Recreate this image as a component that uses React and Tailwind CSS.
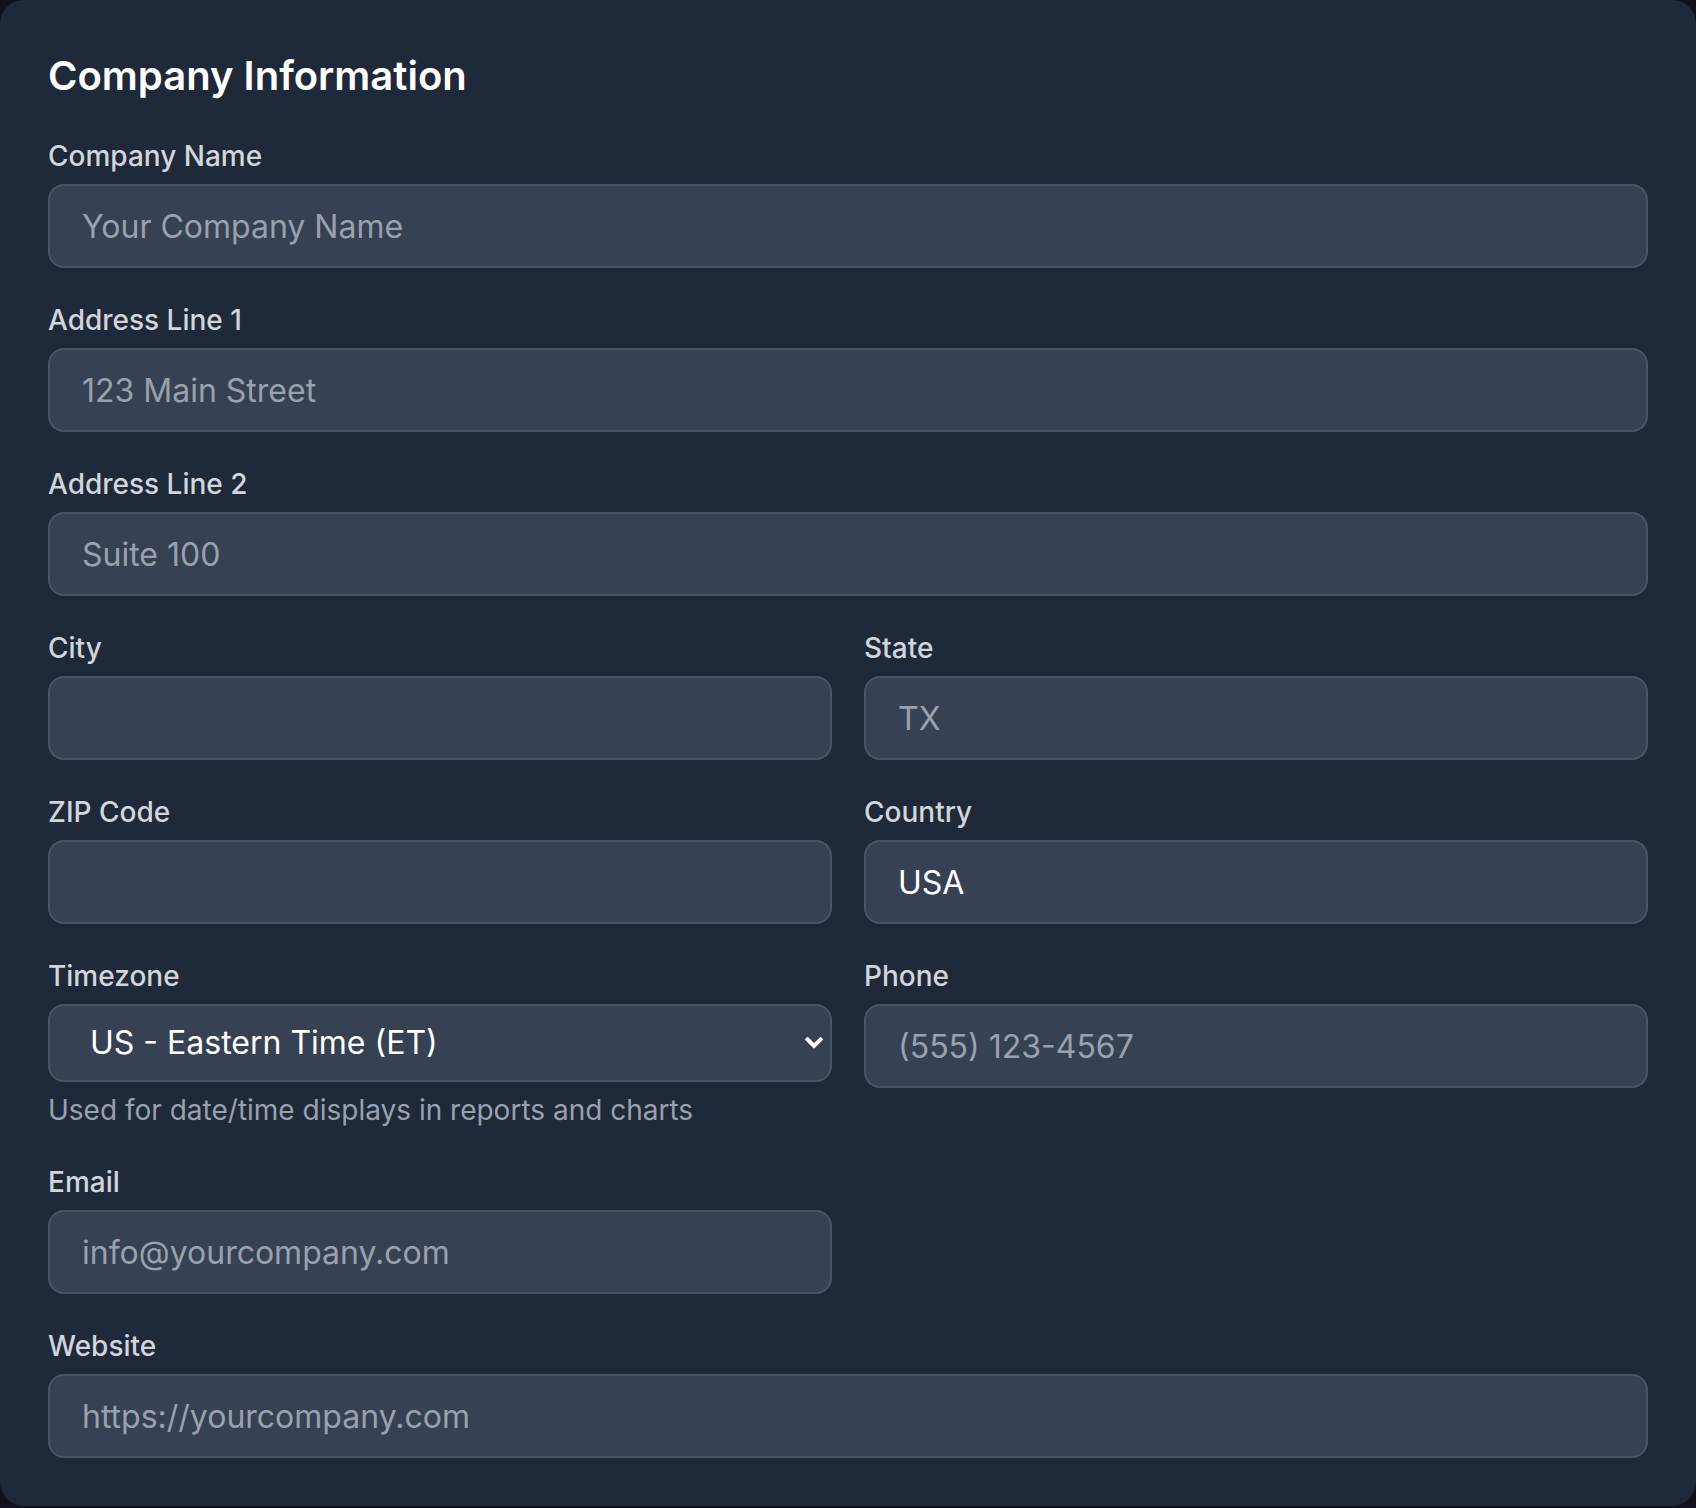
import { useState } from 'react';

// Field wrapper: label + control
function Field({ label, children, className = '' }) {
  return (
    <div className={`flex flex-col ${className}`}>
      <label className="mb-2 text-[28px] leading-[40px] font-medium text-gray-300">{label}</label>
      {children}
    </div>
  );
}

function TextInput({ placeholder, value }) {
  return (
    <input
      type="text"
      defaultValue={value}
      placeholder={placeholder}
      className="h-[84px] w-full rounded-2xl border-2 border-gray-600 bg-gray-700 px-8 text-[32px] leading-[48px] text-white placeholder:text-gray-400 outline-none"
    />
  );
}

export default function App() {
  const [tz, setTz] = useState('America/New_York');

  return (
    <div className="min-h-[1508px] bg-[#13111c]" style={{ fontFamily: 'Inter, "Noto Sans", sans-serif' }}>
      <div className="rounded-[24px] bg-gray-800 p-12">
        <h2 className="mb-8 text-[40px] leading-[56px] font-semibold text-white">Company Information</h2>

        <div className="flex flex-col gap-8">
          <Field label="Company Name">
            <TextInput placeholder="Your Company Name" />
          </Field>
          <Field label="Address Line 1">
            <TextInput placeholder="123 Main Street" />
          </Field>
          <Field label="Address Line 2">
            <TextInput placeholder="Suite 100" />
          </Field>

          <div className="grid grid-cols-2 gap-8">
            <Field label="City">
              <TextInput placeholder="" />
            </Field>
            <Field label="State">
              <TextInput placeholder="TX" />
            </Field>
          </div>

          <div className="grid grid-cols-2 gap-8">
            <Field label="ZIP Code">
              <TextInput placeholder="" />
            </Field>
            <Field label="Country">
              <TextInput value="USA" />
            </Field>
          </div>

          <div className="grid grid-cols-2 items-start gap-8">
            <Field label="Timezone">
              <div className="relative">
                <select
                  value={tz}
                  onChange={(e) => setTz(e.target.value)}
                  className="h-[78px] w-full appearance-none rounded-2xl border-2 border-gray-600 bg-gray-700 pl-[40px] pr-16 text-[32px] leading-[48px] text-white outline-none"
                >
                  <option value="America/New_York">US - Eastern Time (ET)</option>
                  <option value="America/Chicago">US - Central Time (CT)</option>
                  <option value="America/Denver">US - Mountain Time (MT)</option>
                  <option value="America/Los_Angeles">US - Pacific Time (PT)</option>
                </select>
                <svg
                  className="pointer-events-none absolute right-[9px] top-1/2 -translate-y-1/2"
                  width="18"
                  height="12"
                  viewBox="0 0 18 12"
                  fill="none"
                >
                  <path d="M2.5 2.5 L9 9 L15.5 2.5" stroke="white" strokeWidth="4" strokeLinecap="square" strokeLinejoin="miter" />
                </svg>
              </div>
              <p className="mt-2 text-[28px] leading-[40px] text-gray-400">Used for date/time displays in reports and charts</p>
            </Field>
            <Field label="Phone">
              <TextInput placeholder="(555) 123-4567" />
            </Field>
          </div>

          <div className="grid grid-cols-2 gap-8">
            <Field label="Email">
              <TextInput placeholder="info@yourcompany.com" />
            </Field>
          </div>

          <Field label="Website">
            <TextInput placeholder="https://yourcompany.com" />
          </Field>
        </div>
      </div>
    </div>
  );
}
